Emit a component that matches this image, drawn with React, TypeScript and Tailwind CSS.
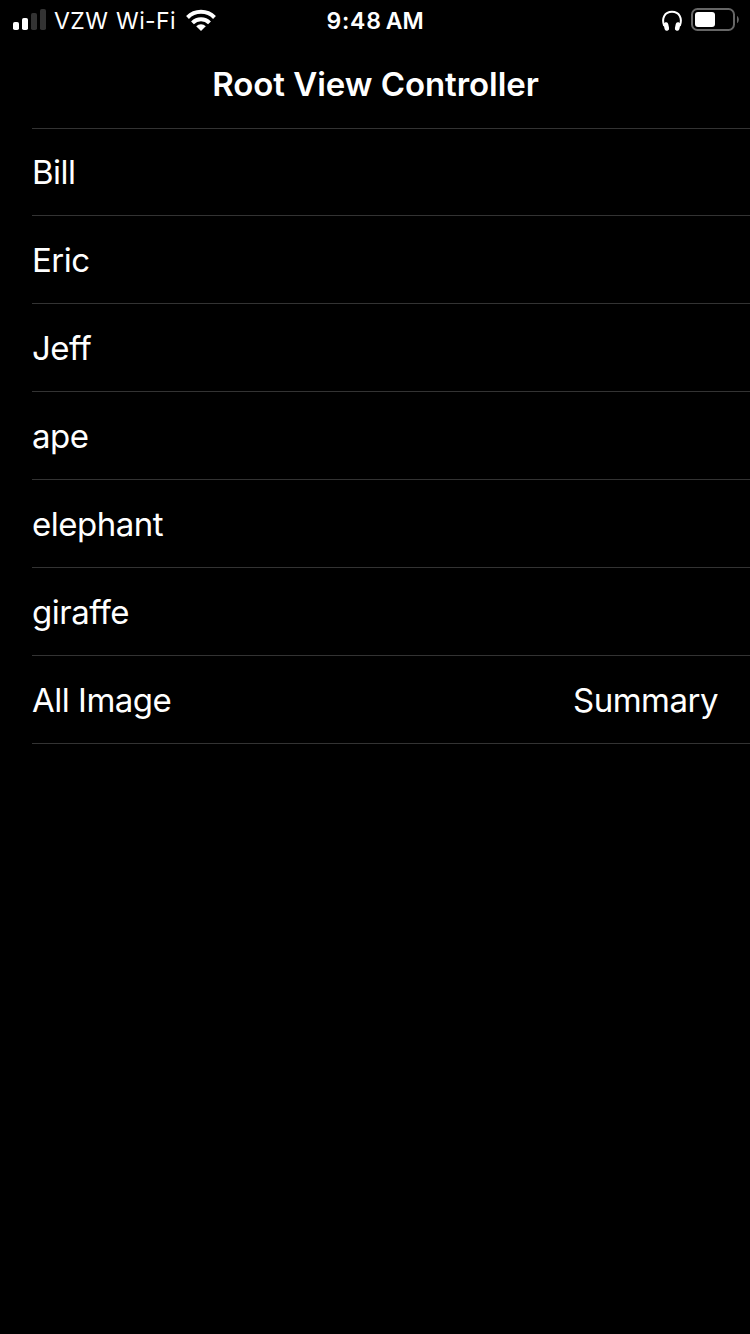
type Row = { label: string; detail?: string };

const rows: Row[] = [
  { label: "Bill" },
  { label: "Eric" },
  { label: "Jeff" },
  { label: "ape" },
  { label: "elephant" },
  { label: "giraffe" },
  { label: "All Image", detail: "Summary" },
];

function SignalIcon() {
  return (
    <svg width="33" height="22" viewBox="0 0 33 22" fill="#fff">
      <rect x="0" y="13" width="6" height="8" rx="1.8" />
      <rect x="9" y="9" width="6" height="12" rx="1.8" />
      <rect x="18" y="4" width="6" height="17" rx="1.8" fill="#333" />
      <rect x="27" y="0" width="6" height="21" rx="1.8" fill="#333" />
    </svg>
  );
}

function WifiIcon() {
  return (
    <svg width="30" height="22" viewBox="0 0 30 22" fill="none" stroke="#fff" strokeWidth="4">
      <path d="M1.5 8.5a19 19 0 0 1 27 0M6.5 13.8a12 12 0 0 1 17 0" />
      <path d="M15 22l-4.8-4.8a7 7 0 0 1 9.6 0z" fill="#fff" stroke="none" />
    </svg>
  );
}

function HeadphonesIcon() {
  return (
    <svg width="20" height="24" viewBox="0 0 20 24" fill="none">
      <path d="M2.2 18C-.8 10 2.8 3.8 10 3.8S20.8 10 17.8 18" stroke="#fff" strokeWidth="2" />
      <rect x="2" y="14.2" width="4.6" height="8.6" rx="2.2" fill="#fff" transform="rotate(-12 4.3 18)" />
      <rect x="13.4" y="14.2" width="4.6" height="8.6" rx="2.2" fill="#fff" transform="rotate(12 15.7 18)" />
    </svg>
  );
}

function BatteryIcon() {
  return (
    <svg width="48" height="24" viewBox="0 0 48 24">
      <rect x="1" y="1" width="42" height="21" rx="5.5" fill="none" stroke="#666" strokeWidth="2" />
      <rect x="4" y="4" width="20" height="15" rx="3" fill="#fff" />
      <path d="M46 8c2.4 1.2 2.4 6 0 7.2z" fill="#666" />
    </svg>
  );
}

export default function App() {
  return (
    <div className="flex h-[1334px] w-[750px] flex-col overflow-hidden bg-black font-['Inter',sans-serif] text-white">
      <header className="grid h-10 grid-cols-[1fr_auto_1fr] items-center">
        <div className="flex items-center pl-[13px]">
          <SignalIcon />
          <span className="mr-[9.5px] ml-2 pt-0.5 text-[23px] leading-[38px] tracking-[0.4px] [word-spacing:1px] whitespace-nowrap">
            VZW Wi-Fi
          </span>
          <WifiIcon />
        </div>
        <div className="flex gap-1 pt-0.5 text-[23px] leading-[38px] font-semibold whitespace-nowrap">
          <span className="tracking-[0.8px]">9:48</span>
          <span>AM</span>
        </div>
        <div className="flex items-center justify-end gap-[9px] pr-[11px]">
          <HeadphonesIcon />
          <BatteryIcon />
        </div>
      </header>
      <h1 className="flex h-[88px] items-center justify-center pt-0.5 pl-px text-[33px] font-semibold tracking-[-0.05px]">
        Root View Controller
      </h1>
      <ul className="ml-8 border-t border-[#333]">
        {rows.map((row) => (
          <li
            key={row.label}
            className="flex h-[88px] items-center justify-between border-b border-[#333] pt-[3px] pr-8 text-[33px] tracking-[-0.5px] first:h-[87px] first:pt-0.5"
          >
            <span>{row.label}</span>
            {row.detail && <span>{row.detail}</span>}
          </li>
        ))}
      </ul>
    </div>
  );
}
